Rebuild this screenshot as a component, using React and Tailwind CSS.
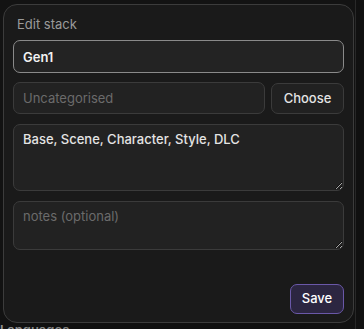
export default function App() {
  return (
    <div
      className="relative h-[329px] w-[364px] overflow-hidden bg-[#141414]"
      style={{ fontFamily: "Inter, 'Noto Sans', sans-serif" }}
    >
      {/* page behind the dialog */}
      <div className="absolute inset-0">
        <div className="flex h-full">
          <div className="w-[356px] border-r border-[#2a2a2a]" />
          <div className="flex-1 bg-[#121212]" />
        </div>
        <div className="absolute bottom-[-9px] left-0 text-[13px] font-semibold leading-4 text-[#9a9a9a]">
          Languages
        </div>
      </div>

      {/* dialog */}
      <div className="absolute left-[3px] top-[4px] flex h-[319px] w-[351px] flex-col rounded-[14px] border border-[#3c3c3c] bg-[#1a1a1a] px-[9px] pb-[8px] pt-[11px] shadow-2xl">
        <div className="pl-[4px] text-[13px] leading-4 text-[#9a9a9a]">Edit stack</div>

        <input
          defaultValue="Gen1"
          className="mt-[8px] h-[33px] w-full rounded-[7px] border border-[#8a8a8a] bg-[#232323] px-[9px] text-[13px] font-semibold text-[#f2f2f2] outline-none"
        />

        <div className="mt-[9px] flex gap-[6px]">
          <input
            placeholder="Uncategorised"
            className="h-[32px] w-[252px] rounded-[7px] border border-[#3b3b3b] bg-[#222222] px-[9px] text-[13px] text-white outline-none placeholder:text-[#6b6b6b]"
          />
          <button className="mt-[1px] h-[31px] flex-1 rounded-[7px] border border-[#3b3b3b] bg-[#212121] text-[13px] font-medium text-[#e4e4e4]">
            Choose
          </button>
        </div>

        <textarea
          defaultValue="Base, Scene, Character, Style, DLC"
          className="mt-[10px] h-[67px] w-full rounded-[7px] border border-[#3b3b3b] bg-[#222222] px-[9px] pt-[4px] text-[13px] leading-5 font-medium text-[#e4e4e4] outline-none"
        />

        <textarea
          placeholder="notes (optional)"
          className="mt-[10px] h-[49px] w-full rounded-[7px] border border-[#3b3b3b] bg-[#222222] px-[9px] pt-[4px] text-[13px] leading-5 text-white outline-none placeholder:text-[#6b6b6b]"
        />

        <div className="mt-auto flex justify-end">
          <button className="h-[30px] w-[54px] rounded-[7px] border border-[#6a58a8] bg-[#2c2641] text-[13px] font-medium text-white">
            Save
          </button>
        </div>
      </div>
    </div>
  );
}
